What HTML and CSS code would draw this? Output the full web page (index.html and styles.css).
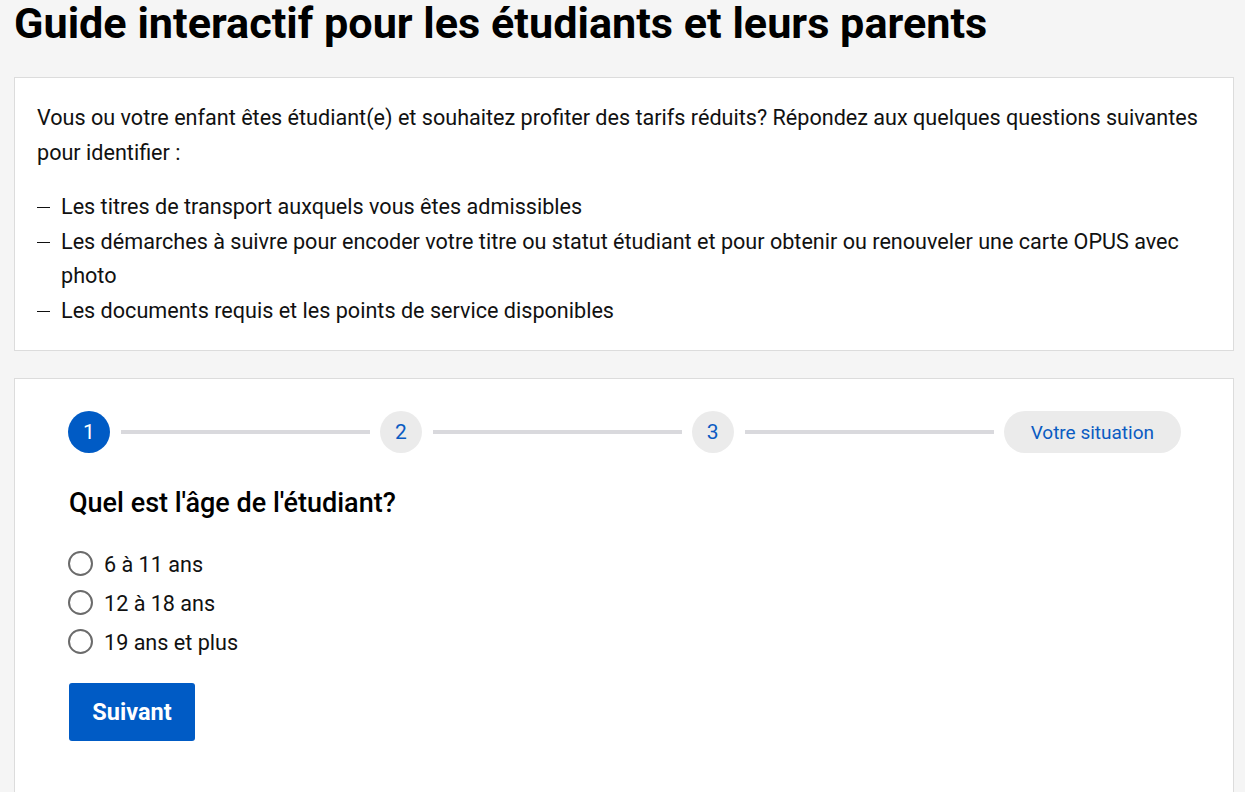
FILE: index.html
```html
<!DOCTYPE html>
<html lang="fr">
<head>
<meta charset="utf-8">
<title>Guide interactif</title>
<link rel="stylesheet" href="styles.css">
</head>
<body>
<main class="page">
  <h1 class="title">Guide interactif pour les étudiants et leurs parents</h1>
  <section class="card intro">
    <p class="lead">Vous ou votre enfant êtes étudiant(e) et souhaitez profiter des tarifs réduits? Répondez aux quelques questions suivantes pour identifier :</p>
    <ul class="dash-list">
      <li>Les titres de transport auxquels vous êtes admissibles</li>
      <li>Les démarches à suivre pour encoder votre titre ou statut étudiant et pour obtenir ou renouveler une carte OPUS avec photo</li>
      <li>Les documents requis et les points de service disponibles</li>
    </ul>
  </section>
  <section class="card quiz">
    <ol class="stepper">
      <li class="step active">1</li>
      <li class="step-line"></li>
      <li class="step">2</li>
      <li class="step-line"></li>
      <li class="step">3</li>
      <li class="step-line"></li>
      <li class="step pill">Votre situation</li>
    </ol>
    <h2 class="question">Quel est l'âge de l'étudiant?</h2>
    <div class="options">
      <label class="option"><span class="radio"></span>6 à 11 ans</label>
      <label class="option"><span class="radio"></span>12 à 18 ans</label>
      <label class="option"><span class="radio"></span>19 ans et plus</label>
    </div>
    <button class="btn" type="button">Suivant</button>
  </section>
</main>
</body>
</html>
```

FILE: styles.css
```css
* { box-sizing: border-box; }
html, body { margin: 0; padding: 0; }
body {
  background: #f5f5f5;
  font-family: Roboto, "Liberation Sans", Arial, sans-serif;
  color: #111;
}
.page {
  padding: 0 11px 0 14px;
}
.title {
  margin: 0;
  padding: 0 0 29px;
  font-size: 43.2px;
  line-height: 48px;
  font-weight: 700;
  color: #000;
}
.card {
  background: #fff;
  border: 1px solid #dcdcdc;
}
.intro {
  padding: 22px 22px 22px;
  margin-bottom: 27px;
}
.lead {
  margin: 0 0 20px;
  font-size: 21.6px;
  line-height: 35px;
}
.dash-list {
  list-style: none;
  margin: 0;
  padding: 0;
  font-size: 21.6px;
  line-height: 34.5px;
}
.dash-list li {
  position: relative;
  padding-left: 24px;
}
.dash-list li::before {
  content: "";
  position: absolute;
  left: 0;
  top: 17px;
  width: 13px;
  height: 1px;
  background: #111;
}
.quiz {
  padding: 32px 52px 50px 53px;
  min-height: 460px;
}
.stepper {
  list-style: none;
  margin: 0;
  padding: 0;
  display: flex;
  align-items: center;
}
.step {
  flex: none;
  width: 42px;
  height: 42px;
  border-radius: 21px;
  background: #ebebeb;
  color: #0a5bc2;
  font-size: 21px;
  display: flex;
  align-items: center;
  justify-content: center;
}
.step.active {
  background: #005bc5;
  color: #fff;
}
.step.pill {
  width: auto;
  padding: 0 27px;
  font-size: 19px;
}
.step-line {
  flex: 1;
  height: 4px;
  background: #d9d9dd;
  margin: 0 10px 0 11px;
}
.question {
  margin: 34px 0 31px 1px;
  font-size: 27px;
  line-height: 32px;
  font-weight: 500;
  color: #000;
}
.options {
  display: flex;
  flex-direction: column;
  gap: 9px;
}
.option {
  display: flex;
  align-items: center;
  font-size: 21.6px;
  line-height: 30px;
  gap: 11px;
}
.radio {
  width: 25px;
  height: 25px;
  border: 2px solid #6b6b6b;
  border-radius: 50%;
  margin-top: -4px;
}
.btn {
  margin-top: 25px;
  margin-left: 1px;
  width: 126px;
  height: 58px;
  border: 0;
  border-radius: 3px;
  background: #005bc5;
  color: #fff;
  font-family: Roboto, "Liberation Sans", Arial, sans-serif;
  font-size: 23.5px;
  font-weight: 700;
}
```
